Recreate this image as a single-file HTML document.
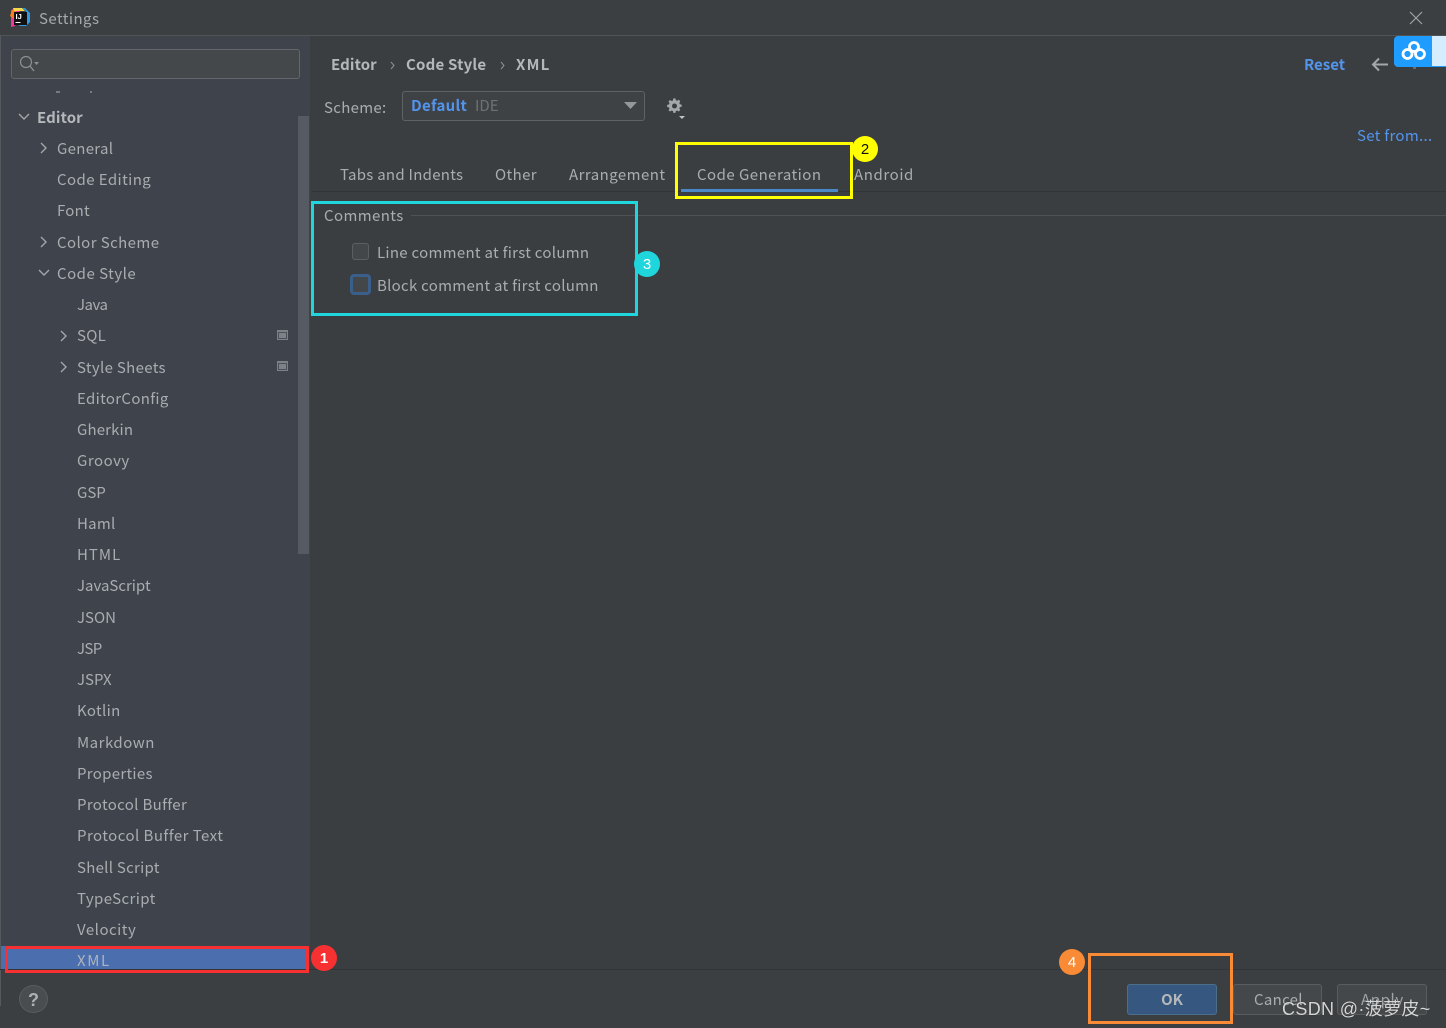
<!DOCTYPE html>
<html><head><meta charset="utf-8"><title>Settings</title>
<style>
html,body{margin:0;padding:0;background:#3b3e41}
#r{position:relative;width:1446px;height:1028px;overflow:hidden;background:#3b3e41;font-family:"Noto Sans CJK SC","Liberation Sans",sans-serif;font-size:15px;color:#a9adb0}
#r div,#r svg{position:absolute}
.t{white-space:nowrap;line-height:20px;height:20px;margin-top:1px;letter-spacing:.3px}
.b{font-weight:700;color:#b4b8bb;letter-spacing:.1px}
.n{width:26px;height:26px;border-radius:50%;text-align:center;line-height:27px;font-size:15px;font-family:"Liberation Sans",sans-serif;color:#fff}
</style></head><body><div id="r">
<div style="left:0;top:0;width:1446px;height:35px;background:#3c3f41"></div>
<div style="left:0;top:35px;width:1446px;height:1px;background:#515355"></div>
<div style="left:1px;top:36px;width:309px;height:933px;background:#3e434c"></div>
<div style="left:0;top:36px;width:1px;height:970px;background:#55585c"></div>

<svg style="left:10px;top:7px" width="20" height="21" viewBox="0 0 20 21"><path d="M1 3l5-2 4 2-5 16-4 1z" fill="#f0389a"/><path d="M0 9l2-6 4 1-2 8z" fill="#fc801d"/><path d="M3 1h9l3 3H4z" fill="#f5d94a"/><path d="M12 1h3l5 5v9l-4 4H9l7-15z" fill="#2a9ce8"/><rect x="4" y="5" width="13" height="13" fill="#111"/><text x="5.500" y="12" font-size="7.500" font-weight="700" fill="#fff" font-family="Liberation Sans">IJ</text><rect x="5.500" y="15" width="5" height="1" fill="#fff"/></svg>
<div class="t" style="left:39px;top:8px;color:#a6a9ab;letter-spacing:.45px">Settings</div>
<svg style="left:1408px;top:10px" width="16" height="16"><path d="M2 2l12 12M14 2L2 14" stroke="#a0a2a4" stroke-width="1.2" fill="none"/></svg>

<div style="left:11px;top:49px;width:287px;height:28px;background:#45484a;border:1px solid #646669;border-radius:3px"></div>
<svg style="left:18px;top:55px" width="24" height="18"><circle cx="8" cy="7" r="5.500" fill="none" stroke="#8c8f92" stroke-width="1.200"/><path d="M12 11l4 5" stroke="#8c8f92" stroke-width="1.400"/><path d="M16 7h5l-2.500 3z" fill="#8c8f92"/></svg>
<div style="left:298px;top:116px;width:11px;height:438px;background:#565a63"></div>
<div style="left:56px;top:91px;width:4px;height:2px;background:#777b80"></div>
<div style="left:90px;top:91px;width:2px;height:2px;background:#777b80"></div>

<svg style="left:18px;top:111px" width="12" height="12"><path d="M1 3l5 5 5-5" fill="none" stroke="#a4a7aa" stroke-width="1.400"/></svg>
<div class="t b" style="left:37px;top:107px">Editor</div>
<svg style="left:38px;top:142px" width="12" height="12"><path d="M3 1l5 5-5 5" fill="none" stroke="#a4a7aa" stroke-width="1.400"/></svg>
<div class="t" style="left:57px;top:138px">General</div>
<div class="t" style="left:57px;top:169px;letter-spacing:.42px">Code Editing</div>
<div class="t" style="left:57px;top:200px;letter-spacing:.25px">Font</div>
<svg style="left:38px;top:236px" width="12" height="12"><path d="M3 1l5 5-5 5" fill="none" stroke="#a4a7aa" stroke-width="1.400"/></svg>
<div class="t" style="left:57px;top:232px;letter-spacing:.42px">Color Scheme</div>
<svg style="left:38px;top:267px" width="12" height="12"><path d="M1 3l5 5 5-5" fill="none" stroke="#a4a7aa" stroke-width="1.400"/></svg>
<div class="t" style="left:57px;top:263px;letter-spacing:.5px">Code Style</div>
<div class="t" style="left:77px;top:294px;letter-spacing:-.5px">Java</div>
<svg style="left:58px;top:330px" width="12" height="12"><path d="M3 1l5 5-5 5" fill="none" stroke="#a4a7aa" stroke-width="1.400"/></svg>
<div class="t" style="left:77px;top:325px">SQL</div>
<svg style="left:277px;top:330px" width="11" height="10"><rect width="11" height="10" fill="#7c8288"/><rect x="1" y="2" width="9" height="7" fill="#4c5158"/><rect x="2" y="3" width="7" height="5" fill="#7c8288"/></svg>
<svg style="left:58px;top:361px" width="12" height="12"><path d="M3 1l5 5-5 5" fill="none" stroke="#a4a7aa" stroke-width="1.400"/></svg>
<div class="t" style="left:77px;top:357px;letter-spacing:.33px">Style Sheets</div>
<svg style="left:277px;top:361px" width="11" height="10"><rect width="11" height="10" fill="#7c8288"/><rect x="1" y="2" width="9" height="7" fill="#4c5158"/><rect x="2" y="3" width="7" height="5" fill="#7c8288"/></svg>
<div class="t" style="left:77px;top:388px;letter-spacing:.33px">EditorConfig</div>
<div class="t" style="left:77px;top:419px;letter-spacing:.14px">Gherkin</div>
<div class="t" style="left:77px;top:450px;letter-spacing:.5px">Groovy</div>
<div class="t" style="left:77px;top:482px;letter-spacing:0">GSP</div>
<div class="t" style="left:77px;top:513px;letter-spacing:.25px">Haml</div>
<div class="t" style="left:77px;top:544px;letter-spacing:1px">HTML</div>
<div class="t" style="left:77px;top:575px;letter-spacing:0">JavaScript</div>
<div class="t" style="left:77px;top:607px;letter-spacing:0">JSON</div>
<div class="t" style="left:77px;top:638px;letter-spacing:-.6px">JSP</div>
<div class="t" style="left:77px;top:669px;letter-spacing:0">JSPX</div>
<div class="t" style="left:77px;top:700px;letter-spacing:.33px">Kotlin</div>
<div class="t" style="left:77px;top:732px;letter-spacing:.5px">Markdown</div>
<div class="t" style="left:77px;top:763px">Properties</div>
<div class="t" style="left:77px;top:794px;letter-spacing:.33px">Protocol Buffer</div>
<div class="t" style="left:77px;top:825px;letter-spacing:.45px">Protocol Buffer Text</div>
<div class="t" style="left:77px;top:857px;letter-spacing:.27px">Shell Script</div>
<div class="t" style="left:77px;top:888px;letter-spacing:.4px">TypeScript</div>
<div class="t" style="left:77px;top:919px;letter-spacing:.5px">Velocity</div>

<div style="left:0;top:969px;width:1446px;height:1px;background:#323437"></div>
<div style="left:0;top:970px;width:1446px;height:58px;background:#3c3f41"></div>
<div style="left:0;top:970px;width:1px;height:36px;background:#55585c"></div>
<div style="left:1px;top:946px;width:308px;height:23px;background:#4b6eaf"></div>
<div class="t" style="left:77px;top:950px;color:#aeb4bd;letter-spacing:1.6px">XML</div>
<div style="left:5px;top:946px;width:298px;height:21px;border:3px solid #f73131"></div>
<div style="left:19px;top:985px;width:29px;height:28px;border-radius:50%;background:#4a4d4f;border:1px solid #5a5d5f;box-sizing:border-box;text-align:center;line-height:28px;font-weight:700;font-size:18px;color:#aeb0b2;font-family:'Liberation Sans',sans-serif">?</div>

<div class="t b" style="left:331px;top:54px">Editor</div>
<svg style="left:389px;top:61px" width="7" height="9"><path d="M2 1l3 3.500-3 3.500" fill="none" stroke="#909396" stroke-width="1"/></svg>
<div class="t b" style="left:406px;top:54px;letter-spacing:.2px">Code Style</div>
<svg style="left:499px;top:61px" width="7" height="9"><path d="M2 1l3 3.500-3 3.500" fill="none" stroke="#909396" stroke-width="1"/></svg>
<div class="t b" style="left:516px;top:54px;letter-spacing:1.2px">XML</div>
<div class="t" style="left:1304px;top:54px;color:#5394ec;font-weight:700;letter-spacing:0">Reset</div>
<svg style="left:1371px;top:56px" width="20" height="17"><path d="M2 8.500h15M8 2.500l-6 6 6 6" fill="none" stroke="#a4a6a8" stroke-width="2"/></svg>
<div style="left:1413px;top:66px;width:3px;height:3px;background:#6a6c6e"></div>
<div style="left:1394px;top:36px;width:52px;height:31px;background:#1f9cff;border-radius:4px 0 0 4px"></div>
<div style="left:1432px;top:36px;width:14px;height:30px;background:#d4edff"></div>
<svg style="left:1400px;top:39px" width="28" height="24" viewBox="0 0 28 24"><g fill="none" stroke="#fff" stroke-width="2.800"><circle cx="14" cy="8" r="4.500"/><circle cx="7.500" cy="15" r="4.500"/><circle cx="20" cy="15" r="4.500"/></g></svg>

<div class="t" style="left:324px;top:97px">Scheme:</div>
<div style="left:402px;top:91px;width:241px;height:28px;border:1px solid #5f6265;border-radius:3px;background:#3f4244"></div>
<div class="t" style="left:411px;top:95px;color:#5394ec;font-weight:700">Default</div>
<div class="t" style="left:475px;top:95px;color:#6f7275;letter-spacing:0">IDE</div>
<svg style="left:624px;top:102px" width="13" height="8"><path d="M0 0h13L6.500 7z" fill="#95989b"/></svg>
<svg style="left:666px;top:98px" width="22" height="22" viewBox="0 0 22 22"><path d="M9 .5h2.500l.5 2.200 1.600.7 2-1.200 1.800 1.800-1.200 2 .7 1.600 2.200.5v2.500l-2.200.5-.7 1.600 1.200 2-1.800 1.800-2-1.200-1.600.7-.5 2.200H9l-.5-2.200-1.600-.7-2 1.200L3.100 15l1.200-2-.7-1.600-2.200-.5V8.400l2.200-.5.700-1.600-1.200-2 1.800-1.800 2 1.200 1.600-.7z" fill="#a5a8aa" transform="scale(.82)"/><circle cx="8.500" cy="8" r="2.500" fill="#3b3e41"/><path d="M13 18h6l-3 3z" fill="#c0c2c4"/></svg>
<div class="t" style="left:1357px;top:125px;color:#5394ec;letter-spacing:.3px">Set from...</div>

<div class="t" style="left:340px;top:164px;letter-spacing:.27px">Tabs and Indents</div>
<div class="t" style="left:495px;top:164px;letter-spacing:.4px">Other</div>
<div class="t" style="left:569px;top:164px;letter-spacing:.45px">Arrangement</div>
<div class="t" style="left:697px;top:164px;letter-spacing:.47px">Code Generation</div>
<div class="t" style="left:854px;top:164px;letter-spacing:.6px">Android</div>
<div style="left:312px;top:191px;width:1134px;height:1px;background:#323437"></div>
<div style="left:681px;top:189px;width:157px;height:3px;background:#4a88c7"></div>
<div style="left:675px;top:142px;width:172px;height:51px;border:3px solid #ffff00"></div>
<div class="n" style="left:852px;top:136px;background:#ffff00;color:#111">2</div>

<div class="t" style="left:324px;top:205px;letter-spacing:.4px">Comments</div>
<div style="left:411px;top:215px;width:1035px;height:1px;background:#4f5254"></div>
<div style="left:352px;top:243px;width:15px;height:15px;background:#43474a;border:1px solid #5c5f62;border-radius:3px"></div>
<div class="t" style="left:377px;top:242px;letter-spacing:.29px">Line comment at first column</div>
<div style="left:350px;top:274px;width:15px;height:15px;background:#43474a;border:3px solid #3a5f8a;border-radius:4px"></div>
<div class="t" style="left:377px;top:275px;letter-spacing:.28px">Block comment at first column</div>
<div style="left:311px;top:201px;width:321px;height:109px;border:3px solid #1fd6dc"></div>
<div class="n" style="left:634px;top:251px;background:#1fd6dc">3</div>

<div class="n" style="left:311px;top:945px;background:#f73131;font-weight:700">1</div>

<div style="left:1127px;top:984px;width:88px;height:29px;background:#365880;border:1px solid #4c708c;border-radius:3px;text-align:center;line-height:29px;font-weight:700;color:#b4b8bb">OK</div>
<div style="left:1233px;top:984px;width:87px;height:29px;background:#45484a;border:1px solid #5a5d5f;border-radius:3px"></div>
<div style="left:1337px;top:984px;width:88px;height:29px;background:#45484a;border:1px solid #5a5d5f;border-radius:3px"></div>
<div class="t" style="left:1254px;top:989px">Cancel</div>
<div class="t" style="left:1361px;top:989px;color:#a2a5a8;letter-spacing:.6px">Apply</div>
<div style="left:1088px;top:953px;width:139px;height:65px;border:3px solid #f98a36"></div>
<div class="n" style="left:1059px;top:949px;background:#f98a36">4</div>
<div class="t" style="left:1282px;top:998px;font-size:18px;letter-spacing:.35px;color:#d5d6d7;font-family:'Liberation Sans','Noto Sans CJK SC',sans-serif;text-shadow:0 0 1px #2a2a2a">CSDN @·菠萝皮~</div>
</div></body></html>
